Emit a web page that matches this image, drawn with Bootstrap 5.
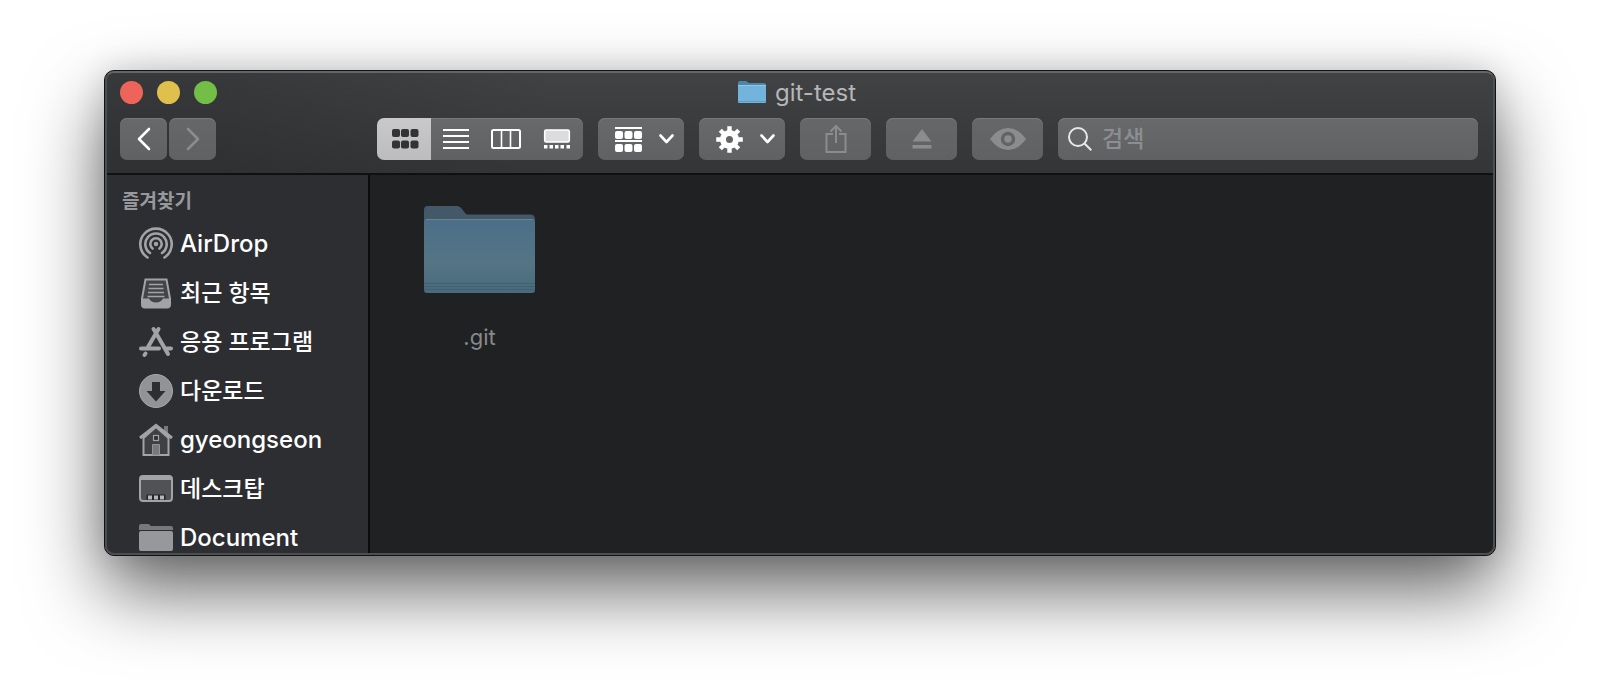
<!DOCTYPE html>
<html lang="ko">
<head>
<meta charset="utf-8">
<meta name="viewport" content="width=device-width, initial-scale=1">
<title>git-test</title>
<link href="https://cdn.jsdelivr.net/npm/bootstrap@5.3.0/dist/css/bootstrap.min.css" rel="stylesheet">
<style>
body{background:#fff;font-family:Inter,"Noto Sans CJK KR",sans-serif;overflow:hidden}
.desk{height:100vh;padding:70px 104px 138px}
.finder{background:#4c4e50;border:1px solid #111214;border-radius:10px;overflow:hidden;box-shadow:0 34px 76px rgba(0,0,0,.62),0 0 30px rgba(0,0,0,.12)}
.frame-edge{border:2px solid #4c4e50;border-top-color:#636567;border-radius:9px;overflow:hidden;min-height:0}
.chrome{background:linear-gradient(90deg,rgba(38,39,42,.35) 0,rgba(38,39,42,.35) 8%,rgba(38,39,42,0) 32%),linear-gradient(#414244,#343537);border-bottom:2px solid #0f1011;padding:0 13px 13px}
.titlebar{height:45px;padding:0 6px 5px 0}
.lights{gap:14px;left:0;top:8px}
.light{width:23px;height:23px;border:0;border-radius:50%;padding:0}
.c-red{background:#ed655a}.c-yellow{background:#e0c04c}.c-green{background:#72be47}
.wintitle{font-size:24px;line-height:36px;color:#b5b6b8;gap:9px}
.wintitle svg{margin-bottom:2px}
.toolbar{padding-right:2px}
.tool{--bs-btn-padding-x:0;--bs-btn-padding-y:0;--bs-btn-border-width:0;--bs-btn-border-radius:7px;height:42px;background:linear-gradient(#68696b,#606163);box-shadow:inset 0 1px #77787a;display:flex;align-items:center;justify-content:center;color:#fff}
.tool:disabled{background:linear-gradient(#666769,#606163);color:#8b8c8e;opacity:1}
.w-nav{width:47px}.w-menu{width:86px;gap:17px}.w-menu svg:first-child{margin-left:6px}.w-one{width:71px}
.views{margin-right:15px;margin-left:161px}
.views .tool{width:51px;border-right:1px solid #505153}
.views .tool:first-child{width:55px;background:linear-gradient(#c9c9cb,#bcbcbe);box-shadow:none;border:0}
.views .tool:last-child{width:52px;border:0}
.search{background:linear-gradient(#68696b,#606163);box-shadow:inset 0 1px #77787a;border-radius:7px;height:42px;padding:0 10px;gap:10px}
.search input{background:none;border:0;outline:0;padding:0;color:#fff;font-size:23px;line-height:36px;font-weight:500;min-width:0}
.search input::placeholder{color:#8d8e90;opacity:1}
.side{width:263px;background:#2d2e32;border-right:2px solid #0b0b0c;overflow:hidden;padding-top:12px}
.side h2{font-size:19px;line-height:30px;font-weight:700;color:#98999c;margin:0 0 2px;padding-left:15px}
.side a{height:49px;padding-left:32px;gap:7px;color:#fff;font-size:24px;line-height:36px;font-weight:500;text-decoration:none;white-space:nowrap}
.side a:lang(ko){font-size:23px}
.side svg{color:#a2a3a7;flex:none}
.files{background:#202123;padding:30px 54px;min-width:0}
.file-item{width:111px;gap:28px;color:#88898b;font-size:22px;line-height:32px;text-decoration:none}
</style>
</head>
<body>
<div class="desk">
<main class="finder h-100 d-flex">
<div class="frame-edge d-flex flex-column flex-grow-1">
<header class="chrome">
  <div class="titlebar position-relative d-flex justify-content-center align-items-center">
    <div class="lights position-absolute d-flex">
      <button class="light c-red" aria-label="닫기"></button><button class="light c-yellow" aria-label="최소화"></button><button class="light c-green" aria-label="확대"></button>
    </div>
    <div class="wintitle d-flex align-items-center">
      <svg width="28" height="22" viewBox="0 0 28 22"><path d="M0 2q0-2 2-2h6l3 2h15q2 0 2 2v8H0z" fill="#4b87a8"/><rect y="4" width="28" height="18" rx="1" fill="#72b4dc"/><path d="M0 4.500h28" stroke="#91c8e8"/><path d="M0 20.500h28" stroke="#5e9cc2"/></svg>
      <span>git-test</span>
    </div>
  </div>
  <div class="toolbar d-flex">
    <div class="d-flex" style="gap:2px">
      <button class="btn tool w-nav" aria-label="뒤로"><svg width="14" height="24" viewBox="0 0 14 24" fill="none" stroke="currentColor" stroke-width="2.600" stroke-linecap="round" stroke-linejoin="round"><path d="M12 2 2 12l10 10"/></svg></button>
      <button class="btn tool w-nav" disabled aria-label="앞으로"><svg width="14" height="24" viewBox="0 0 14 24" fill="none" stroke="currentColor" stroke-width="2.600" stroke-linecap="round" stroke-linejoin="round"><path d="m2 2 10 10L2 22"/></svg></button>
    </div>
    <div class="btn-group views flex-shrink-0">
      <button class="btn tool" aria-label="아이콘"><svg width="28" height="20" viewBox="0 0 28 20" fill="#323335"><rect x="1" width="8" height="8" rx="2"/><rect x="10" width="8" height="8" rx="2"/><rect x="19.500" width="8" height="8" rx="2"/><rect x="1" y="11.500" width="8" height="8" rx="2"/><rect x="10" y="11.500" width="8" height="8" rx="2"/><rect x="19.500" y="11.500" width="8" height="8" rx="2"/></svg></button>
      <button class="btn tool" aria-label="목록"><svg width="26" height="20" viewBox="0 0 26 20" stroke="#fff" stroke-width="2"><path d="M0 1h26M0 7h26M0 13h26M0 19h26"/></svg></button>
      <button class="btn tool" aria-label="계층"><svg width="30" height="20" viewBox="0 0 30 20" fill="none" stroke="#fff" stroke-width="2"><rect x="1" y="1" width="28" height="18" rx="1.500"/><path d="M10.500 1v18M19.500 1v18" stroke-width="1.600"/></svg></button>
      <button class="btn tool" aria-label="갤러리"><svg width="28" height="20" viewBox="0 0 28 20" fill="#fff"><rect x="1.700" y="1" width="24.600" height="12" rx="1.500" fill="#dcdcde" stroke="#fff" stroke-width="1.600"/><path d="M1 16h3.500v3.500H1zM6.500 16H10v3.500H6.500zM12 16h3.500v3.500H12zM17.500 16H21v3.500h-3.500zM23.500 16H27v3.500h-3.500z"/></svg></button>
    </div>
    <div class="d-flex flex-grow-1" style="gap:15px">
      <button class="btn tool w-menu" aria-label="그룹"><svg width="27" height="25" viewBox="0 0 27 25" fill="#fff"><path d="M0 0h27v2H0zM0 13h27v2H0z"/><rect y="4" width="8" height="8" rx="2"/><rect x="9.500" y="4" width="8" height="8" rx="2"/><rect x="19" y="4" width="8" height="8" rx="2"/><rect y="17" width="8" height="8" rx="2"/><rect x="9.500" y="17" width="8" height="8" rx="2"/><rect x="19" y="17" width="8" height="8" rx="2"/></svg><svg width="15" height="10" viewBox="0 0 15 10" fill="none" stroke="#fff" stroke-width="2.600" stroke-linecap="round" stroke-linejoin="round"><path d="m1.500 1.500 6 6.500 6-6.500"/></svg></button>
      <button class="btn tool w-menu" aria-label="동작"><svg width="27" height="27" viewBox="-13.500 -13.500 27 27"><circle r="6.500" fill="none" stroke="#fff" stroke-width="6"/><g stroke="#fff" stroke-width="4.400"><path d="M0-13.300V-7M0 13.300V7M-13.300 0H-7M13.300 0H7"/><path d="M0-13V-7M0 13V7M-13 0H-7M13 0H7" transform="rotate(45)"/></g></svg><svg width="15" height="10" viewBox="0 0 15 10" fill="none" stroke="#fff" stroke-width="2.600" stroke-linecap="round" stroke-linejoin="round"><path d="m1.500 1.500 6 6.500 6-6.500"/></svg></button>
      <button class="btn tool w-one" disabled aria-label="공유"><svg width="22" height="30" viewBox="0 0 22 30" fill="none" stroke="currentColor" stroke-width="2"><path d="M8 10H1.500v18h19V10H14M11 19V2M5.500 7.500 11 2l5.500 5.500"/></svg></button>
      <button class="btn tool w-one" disabled aria-label="추출"><svg width="20" height="20" viewBox="0 0 20 20" fill="currentColor"><path d="M10 0l9.500 12.500H.5zM.5 16h19v3.500H.5z"/></svg></button>
      <button class="btn tool w-one" disabled aria-label="훑어보기"><svg width="36" height="24" viewBox="0 0 36 24"><path d="M0 12Q8 1 18 1t18 11Q28 23 18 23T0 12z" fill="currentColor"/><circle cx="18" cy="12" r="5.500" fill="none" stroke="#626365" stroke-width="3.400"/></svg></button>
      <div class="search d-flex align-items-center flex-grow-1">
        <svg width="24" height="24" viewBox="0 0 24 24" fill="none" stroke="#e8e8ea" stroke-width="2"><circle cx="10" cy="10" r="9"/><path d="m16.300 16.300 7 7"/></svg>
        <input type="search" class="flex-grow-1" aria-label="검색" placeholder="검색">
      </div>
    </div>
  </div>
</header>
<div class="d-flex flex-grow-1" style="min-height:0">
  <nav class="side flex-shrink-0" aria-label="즐겨찾기">
    <h2>즐겨찾기</h2>
    <a href="#" lang="en" class="d-flex align-items-center"><svg width="34" height="34" viewBox="0 0 34 34" fill="none" stroke="currentColor" stroke-width="2.600" stroke-linecap="round"><circle cx="17" cy="17" r="2.200" fill="currentColor" stroke="none"/><path d="M13.500 21.500a5.700 5.700 0 1 1 7 0M11 26a10.700 10.700 0 1 1 12 0M8.500 30.500a15.700 15.700 0 1 1 17 0"/></svg><span>AirDrop</span></a>
    <a href="#" class="d-flex align-items-center"><svg width="34" height="34" viewBox="0 0 34 34"><path d="M6.500 3.500h21l3.500 19v6q0 3-3 3H6q-3 0-3-3v-6z" fill="#434448" stroke="currentColor" stroke-width="2"/><path d="M3 22.500h7q2 4 7 4t7-4h7v6q0 3-3 3H6q-3 0-3-3z" fill="currentColor"/><path d="M10 8.500h14M9.500 12.500h15M9 16.500h16M8.500 20.500h17" stroke="currentColor" stroke-width="1.600"/></svg><span>최근 항목</span></a>
    <a href="#" class="d-flex align-items-center"><svg width="34" height="34" viewBox="0 0 34 34" fill="none" stroke="currentColor" stroke-width="4" stroke-linecap="round"><path d="M14.500 4l2.500 4 12 21M19.500 4 9 22M6.500 28.500 5.500 30M2 23.500h18M28 23.500h4"/></svg><span>응용 프로그램</span></a>
    <a href="#" class="d-flex align-items-center"><svg width="34" height="34" viewBox="0 0 34 34"><circle cx="17" cy="17" r="16.500" fill="#929397" stroke="#a6a7ab"/><path d="M13 8h8v9h5.500L17 27.500 7.500 17H13z" fill="#2d2e32"/></svg><span>다운로드</span></a>
    <a href="#" lang="en" class="d-flex align-items-center"><svg width="34" height="34" viewBox="0 0 34 34"><path d="M25 3h4v11h-4z" fill="#77787b"/><path d="M4.500 15v17h25V15L17 4z" fill="#3f4043" stroke="currentColor" stroke-width="2"/><path d="M1 15 17 2.500 33 15" fill="none" stroke="currentColor" stroke-width="3"/><rect x="14.500" y="12.500" width="5" height="5" fill="#2d2e32" stroke="currentColor" stroke-width="1.200"/><path d="M13.500 21.500h7V32h-7z" fill="#77787b" stroke="#929397"/></svg><span>gyeongseon</span></a>
    <a href="#" class="d-flex align-items-center"><svg width="34" height="34" viewBox="0 0 34 34"><rect x="1" y="4" width="32" height="25" rx="3" fill="#515255" stroke="currentColor" stroke-width="2"/><path d="M2 4h30v4H2z" fill="currentColor"/><path d="M7.500 22.500h19V28h-19z" fill="#242528"/><path d="M9 23.500h4v4H9zM15 23.500h4v4h-4zM21 23.500h4v4h-4z" fill="#b5b6ba"/></svg><span>데스크탑</span></a>
    <a href="#" lang="en" class="d-flex align-items-center"><svg width="34" height="34" viewBox="0 0 34 34"><path d="M0 5q0-2 2-2h7q2 0 2.500 2H32q2 0 2 2v2H0z" fill="#77787c"/><rect y="10" width="34" height="20" rx="2" fill="#97989c"/></svg><span>Document</span></a>
  </nav>
  <section class="files flex-grow-1">
    <a href="#" class="file-item d-flex flex-column align-items-center">
      <svg width="111" height="88" viewBox="0 0 111 88"><defs><linearGradient id="fold" x1="0" y1="0" x2="0" y2="1"><stop stop-color="#4b6f88"/><stop offset=".6" stop-color="#557585"/><stop offset="1" stop-color="#486a7b"/></linearGradient></defs><path d="M0 5q0-4 4-4h29q3 0 5 3l3 4q1 1.500 3 1.500h62q5 0 5 5V30H0z" fill="#43596a"/><rect y="14" width="111" height="74" rx="3" fill="url(#fold)"/><path d="M2 14.500h107" stroke="#6b8492"/><path d="M0 78.500h111M0 81.500h111M0 84.500h111" stroke="#3f6071"/></svg>
      <span>.git</span>
    </a>
  </section>
</div>
</div>
</main>
</div>
<script src="https://cdn.jsdelivr.net/npm/bootstrap@5.3.0/dist/js/bootstrap.bundle.min.js"></script>
</body>
</html>
